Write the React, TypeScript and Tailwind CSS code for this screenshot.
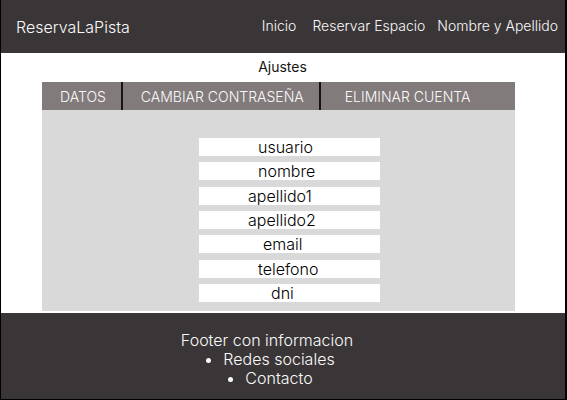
const fields = [
  { name: "usuario", type: "text", indent: "pl-[59px]" },
  { name: "nombre", type: "text", indent: "pl-[59px]" },
  { name: "apellido1", type: "text", indent: "pl-[49px]" },
  { name: "apellido2", type: "text", indent: "pl-[49px]" },
  { name: "email", type: "email", indent: "pl-16" },
  { name: "telefono", type: "tel", indent: "pl-[59px]" },
  { name: "dni", type: "text", indent: "pl-[72px]" },
];

function Header() {
  return (
    <header className="flex h-[53px] items-center justify-between bg-[#3a3637] pr-[7px] pl-[15px] font-light text-[#fbfafa]">
      <a href="#" className="text-base">
        ReservaLaPista
      </a>
      <nav className="flex gap-3 pb-0.5 text-sm">
        <a href="#inicio" className="mr-1">
          Inicio
        </a>
        <a href="#reservar">Reservar Espacio</a>
        <a href="#perfil">Nombre y Apellido</a>
      </nav>
    </header>
  );
}

function Tabs() {
  return (
    <div className="flex h-7 bg-[#827b7c] text-sm font-light text-[#fbfafa]">
      <button type="button" className="border-r-2 border-[#161314] pt-0.5 pr-[15px] pl-[18px]">
        DATOS
      </button>
      <button type="button" className="border-r-2 border-[#161314] pt-0.5 pr-[15px] pl-[18px]">
        CAMBIAR CONTRASEÑA
      </button>
      <button type="button" className="px-6 pt-0.5">
        ELIMINAR CUENTA
      </button>
    </div>
  );
}

export default function App() {
  return (
    <div className="flex min-h-screen flex-col border-r-2 border-b border-l border-black bg-white font-['Inter','Liberation_Sans',sans-serif]">
      <Header />
      <main className="pr-[50px] pb-0.5 pl-[41px]">
        <h1 className="pt-1 pb-[5px] pl-2 text-center text-sm text-[#151314]">Ajustes</h1>
        <Tabs />
        <form className="flex flex-col items-center bg-[#d9d9d9] pt-7 pb-[9px] pl-[22px]">
          <div className="flex h-[164px] w-[181px] flex-col justify-between">
            {fields.map((field) => (
              <input
                key={field.name}
                type={field.type}
                name={field.name}
                aria-label={field.name}
                placeholder={field.name}
                className={`block h-[18px] w-full bg-white text-base/[18px] font-light text-black outline-none placeholder:text-black ${field.indent}`}
              />
            ))}
          </div>
        </form>
      </main>
      <footer className="flex grow flex-col items-center bg-[#3a3637] pt-[18px] pr-8 text-base/[19px] font-light text-[#fbfafa]">
        <p>Footer con informacion</p>
        <ul className="flex list-outside list-disc flex-col items-center pl-6">
          <li>
            <a href="#redes">Redes sociales</a>
          </li>
          <li>
            <a href="#contacto">Contacto</a>
          </li>
        </ul>
      </footer>
    </div>
  );
}
